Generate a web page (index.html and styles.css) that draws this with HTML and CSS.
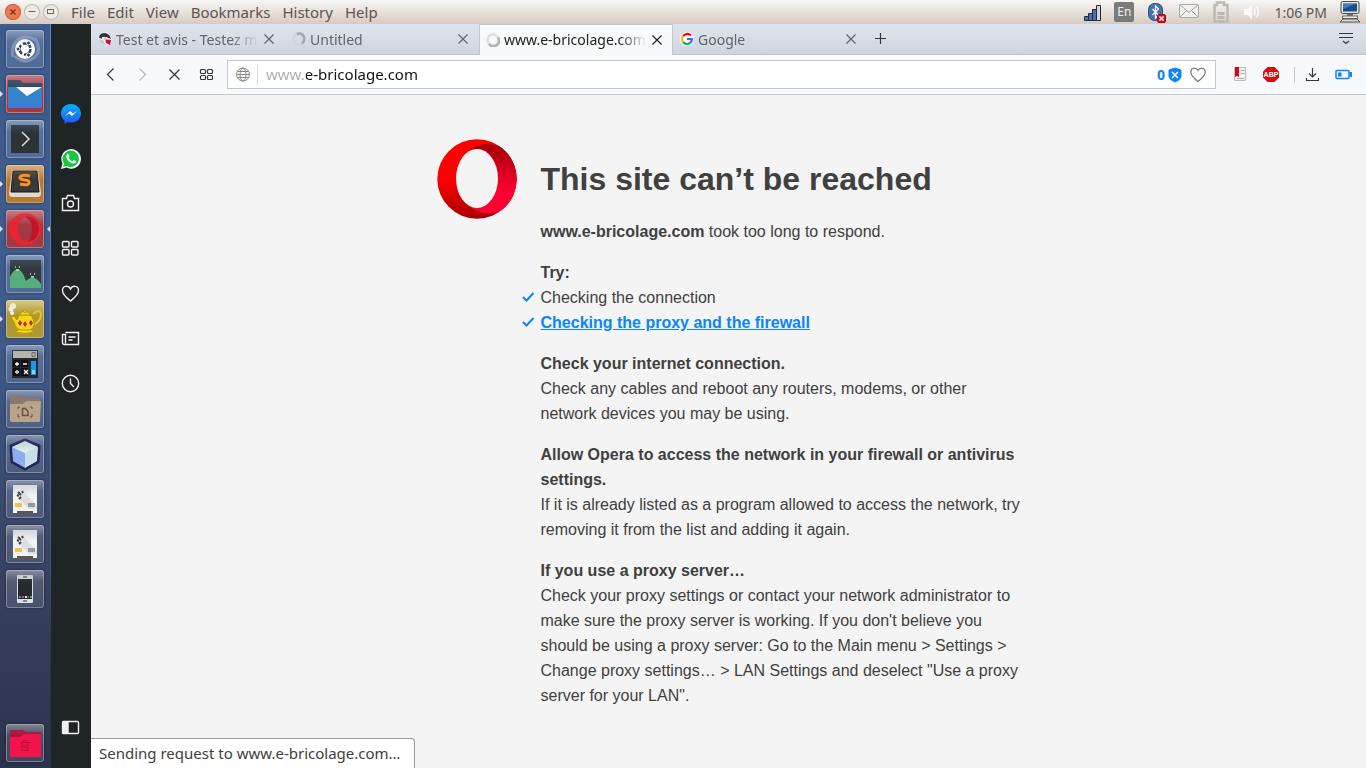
FILE: index.html
```html
<!DOCTYPE html>
<html lang="en">
    <head>
        <meta charset="utf-8">
        <title>www.e-bricolage.com</title>
        <link rel="stylesheet" href="styles.css">
    </head>
    <body>
        <!-- desktop panel -->
        <header class="panel">
            <div class="window-buttons">
                <button class="win close" type="button" aria-label="Close window"><svg width="16" height="16" viewBox="0 0 16 16"><path d="M5.500 5.500l5 5M10.500 5.500l-5 5" stroke="#7b3a22" stroke-width="1.500"/></svg></button>
                <button class="win" type="button" aria-label="Minimize"><svg width="16" height="16" viewBox="0 0 16 16"><path d="M4.500 7.500h7" stroke="#6c6760"/></svg></button>
                <button class="win" type="button" aria-label="Maximize"><svg width="16" height="16" viewBox="0 0 16 16"><rect x="4.500" y="5.500" width="6" height="4" fill="none" stroke="#6c6760"/></svg></button>
            </div>
            <nav class="menu">
                <button type="button">File</button>
                <button type="button">Edit</button>
                <button type="button">View</button>
                <button type="button">Bookmarks</button>
                <button type="button">History</button>
                <button type="button">Help</button>
            </nav>
            <div class="indicators">
                <svg width="20" height="24" viewBox="0 0 20 24"><g fill="#4571b0" stroke="#252a33"><path d="M2.500 16.500h4v4h-4zM6.500 13.500h4v7h-4zM10.500 9.500h4v11h-4z"/><path d="M14.500 5.500h4v15h-4z" fill="#d5d5dc"/></g></svg>
                <span class="lang">En</span>
                <svg width="20" height="24" viewBox="0 0 20 24"><rect x="2.500" y="3.500" width="14" height="17" rx="6" fill="#4572ac" stroke="#274c7e"/><path d="M6.500 9l6 6-3 3V6l3 3-6 6" fill="none" stroke="#fff" stroke-width="1.200"/><rect x="11.500" y="14.500" width="8" height="8" rx="1.500" fill="#d11322" stroke="#a50b18"/><path d="M13.500 16.500l4 4m0-4l-4 4" stroke="#fff" stroke-width="1.500"/></svg>
                <svg width="22" height="24" viewBox="0 0 22 24"><rect x="1.500" y="4.500" width="19" height="13" rx="1" fill="#f1f1ed" stroke="#a9a8a3"/><path d="M2 5l9 7.500L20 5M2 17l6-6M20 17l-6-6" fill="none" stroke="#a09f9a"/></svg>
                <svg width="18" height="24" viewBox="0 0 18 24"><path d="M5 2.500h7V5h3.500v16.500h-13V5H5z" fill="none" stroke="#bcb9b5" stroke-width="2.500"/><path d="M5.500 13.500h7M5.500 17.500h7" stroke="#bcb9b5" stroke-width="3"/></svg>
                <svg width="20" height="24" viewBox="0 0 20 24"><path d="M2 9h4l4-5v16l-4-5H2z" fill="#fbfaf8"/><path d="M12 9q2 3 0 6M14.500 6.500q4 5.500 0 11" fill="none" stroke="#fbfaf8" stroke-width="1.500"/></svg>
                <span class="clock">1:06 PM</span>
                <svg width="22" height="24" viewBox="0 0 22 24"><rect x="2" y="1.500" width="18" height="12" rx="1.500" fill="#e3e5df" stroke="#4b4d4a"/><rect x="4" y="3.500" width="14" height="8" fill="#194d93"/><path d="M4 4h12L4 9z" fill="#487bba"/><path d="M8 14h6v2H8z" fill="#777"/><rect x="3.500" y="16" width="15" height="2.500" fill="#eeeeea" stroke="#666"/><path d="M4 19h14l3 3H1z" fill="#d7d8d3" stroke="#555"/></svg>
            </div>
        </header>

        <div class="desktop">
            <!-- launcher -->
            <nav class="launcher">
                <button class="tile dash" type="button" aria-label="Dash"><svg width="38" height="38" viewBox="0 0 38 38"><g fill="none" stroke="#fff" stroke-opacity=".25" stroke-width="3"><path d="M7 27Q4 10 19 7q8 0 12 5M29 8q9 16-5 22-9 3-15-4"/></g><circle cx="19" cy="19" r="10" fill="#fff"/><circle cx="19" cy="19" r="5.500" fill="none" stroke="#31415e" stroke-width="2.500" stroke-dasharray="9.500 2"/><g fill="#31415e" stroke="#fff"><circle cx="12" cy="19" r="2"/><circle cx="22.500" cy="13" r="2"/><circle cx="22.500" cy="25" r="2"/></g></svg></button>
                <button class="tile red running" type="button" aria-label="Mail"><svg width="38" height="38" viewBox="0 0 38 38"><path d="M2 5h12l3 3h19v25H2z" fill="#235069"/><path d="M2 12h34v21H2z" fill="#3484cb"/><path d="M2 27h34v6H2z" fill="#397ed0"/><path d="M10 12h26l-15 9z" fill="#fff"/></svg></button>
                <button class="tile" type="button" aria-label="Terminal"><svg width="38" height="38" viewBox="0 0 38 38"><path d="M5 5h28v28H5z" fill="#2d3237"/><path d="M16 12l7 7-7 7" fill="none" stroke="#ddd" stroke-width="1.500"/></svg></button>
                <button class="tile orange running" type="button" aria-label="Sublime Text"><svg width="38" height="38" viewBox="0 0 38 38"><path d="M6 5h26l3 23q0 4-3 4H6q-3 0-3-4z" fill="#dedbd7"/><path d="M7 6h24l2 21H5z" fill="#393938" stroke="#171717"/><path d="M24 11q-9-2-10 1.500 0 2 5 2.500 5 .5 4 3-1 3-9 1" fill="none" stroke="#ff911c" stroke-width="3"/></svg></button>
                <button class="tile red running active" type="button" aria-label="Opera"><svg width="38" height="38" viewBox="0 0 38 38"><path fill="#e8262f" fill-rule="evenodd" d="M19 3a16 16 0 1 0 .1 0zM20 7q6 2 6 12t-6 12q-8-2-8-12t8-12z"/><path d="M21 6q11 1 12 13-1 12-12 13 5-4 5-13T19 7z" fill="#bd1525"/></svg></button>
                <button class="tile" type="button" aria-label="System monitor"><svg width="38" height="38" viewBox="0 0 38 38"><path d="M4 5h31v28H4z" fill="#30393c"/><path d="M4 22q3-7 7-8 5 0 9 12 4-4 8-3 4 1 7 6v4H4z" fill="#55af7c"/><path d="M9 12h1m3 0h1m-4 3h3m11 4h1m3 0h1m-4 3h3" stroke="#bde2ca" stroke-width="1.500"/></svg></button>
                <button class="tile yellow running" type="button" aria-label="Teapot"><svg width="38" height="38" viewBox="0 0 38 38"><g fill="#f5d81e" stroke="#b59500"><path d="M27 14q7-6 8 0 0 8-8 11" fill="none" stroke="#e6c426" stroke-width="2"/><path d="M14 29h10l4 3q-9 3-19 0z"/><path d="M13 15h12q7 11-1 15H14Q8 27 8 22l-3-5 3-1 3 4z"/><path d="M13 15q6-8 12 0z"/><circle cx="19" cy="11" r="1.500"/></g><path d="M14 20l2 3-2 3-2-3zm5 1l2 3-2 3-2-3zm6-1l2 3-2 3-2-3z" fill="#d52120"/><g fill="#f7f7f7"><circle cx="7" cy="6" r="3"/><circle cx="5" cy="9" r="2.500"/><circle cx="6" cy="13" r="2"/></g></svg></button>
                <button class="tile" type="button" aria-label="Calculator"><svg width="38" height="38" viewBox="0 0 38 38"><path d="M6 5h26v28H6z" fill="#25282c"/><path d="M7 6h24v7H7z" fill="#c1bcb0"/><path d="M26 7.500h3v4h-3z" fill="none" stroke="#6d6b65"/><path d="M7 15h7v7H7zm8 0h7v7h-7zm-8 8h7v8H7zm8 0h7v8h-7z" fill="#0d0f12"/><path d="M9 19h4m-2-2v4m6-2h4M9 27h4m-2-2v1m0 2v1m7-4l4 4m0-4l-4 4" stroke="#fff" stroke-width="1.300"/><path d="M25 16h5v14h-5z" fill="#1899ef"/><path d="M26 26h3m-3 2h3" stroke="#fff"/></svg></button>
                <button class="tile" type="button" aria-label="Files"><svg width="38" height="38" viewBox="0 0 38 38"><path d="M4 7q0-2 2-2h10l3 3h13q2 0 2 3v20H4z" fill="#8d7a67"/><path d="M4 14h13l3-3h15l-1 20q0 1-2 1H6q-2 0-2-2z" fill="#baa58a"/><path d="M12 19v-2h2m10 0h2v2m0 5v3h-2m-10 0h-2v-3" fill="none" stroke="#65533f"/><path d="M16.500 18.500h3l2.500 3v4h-5.500z" fill="none" stroke="#65533f" stroke-width="1.500"/></svg></button>
                <button class="tile" type="button" aria-label="VirtualBox"><svg width="38" height="38" viewBox="0 0 38 38"><path d="M19 5l14 6-1 16-13 7-13-7-1-16z" fill="#c9e4ee" stroke="#20245c" stroke-width="3" stroke-linejoin="round"/><path d="M6 12l13 6v15L7 26z" fill="#8eadee"/><path d="M19 18l13-6-1 14-12 7z" fill="#c9dfe5"/><path d="M6 12l13-6 13 6-13 6z" fill="#d9eee7"/></svg></button>
                <button class="tile" type="button" aria-label="Disk image writer"><svg width="38" height="38" viewBox="0 0 38 38"><path d="M7 5h24v28H7z" fill="#f3f3f4"/><path d="M12 18l6-6 13 14v3h-8z" fill="#dededf"/><path d="M11 15l2 1m-1-4l3 3m1-4l1 2m-4 6l2-2" stroke="#3e4044" stroke-width="2"/><path d="M9 23h7v4H9z" fill="#f7bd57"/><path d="M22 23h7v4h-7z" fill="#999"/><path d="M11 31h16v2H11z" fill="#655438"/></svg></button>
                <button class="tile" type="button" aria-label="Disk creator"><svg width="38" height="38" viewBox="0 0 38 38"><path d="M7 5h24v28H7z" fill="#f3f3f4"/><path d="M12 18l6-6 13 14v3h-8z" fill="#dededf"/><path d="M11 15l2 1m-1-4l3 3m1-4l1 2m-4 6l2-2" stroke="#3e4044" stroke-width="2"/><path d="M9 23h7v4H9z" fill="#f7bd57"/><path d="M22 23h7v4h-7z" fill="#999"/><path d="M11 31h16v2H11z" fill="#655438"/></svg></button>
                <button class="tile" type="button" aria-label="Phone"><svg width="38" height="38" viewBox="0 0 38 38"><rect x="11" y="5" width="16" height="28" rx="1" fill="#dce1e3"/><path d="M12 9h14v20H12z" fill="#26292c"/><path d="M17 7h4m-4 24h4" stroke="#333"/><path d="M13 27h2" stroke="#2799e8" stroke-width="2"/><path d="M16 27h2m4 0h1" stroke="#e83b62" stroke-width="2"/><path d="M19 27h2" stroke="#eee" stroke-width="2"/><path d="M24 27h2" stroke="#31b86c" stroke-width="2"/></svg></button>
                <button class="tile trash" type="button" aria-label="Trash"><svg width="38" height="38" viewBox="0 0 38 38"><path d="M4 6h13l3 2h15v10H4z" fill="#b80f3c"/><path d="M4 13h10l3-3h18v23H4z" fill="#f4144d"/><path d="M14 18.500h10m-8 0v8h6v-8m-5 0v-2h4v2m-3 2v4m2-4v4" fill="none" stroke="#b80f3c"/></svg></button>
            </nav>

            <!-- opera side bar -->
            <nav class="sidebar">
                <button type="button" aria-label="Messenger"><svg width="20" height="20" viewBox="0 0 20 20"><defs><linearGradient id="messenger" x1="0" y1="0" x2="0" y2="1"><stop stop-color="#00b2ff"/><stop offset="1" stop-color="#2857f6"/></linearGradient></defs><path d="M10 0C4 0 0 4 0 9.500c0 3 1.500 5.500 3.500 7V20l3-2q2 .5 3.500.5c6 0 10-4 10-9S16 0 10 0z" fill="url(#messenger)"/><path d="M4 12l5-5 3 2.500L16 7l-5 5-3-2.500z" fill="#fff"/></svg></button>
                <button type="button" aria-label="WhatsApp"><svg width="20" height="20" viewBox="0 0 20 20"><path d="M0 20l1.500-5.500A9.800 9.800 0 1 1 5.500 18.500z" fill="#fff"/><path d="M2 18l1-3.500A8.200 8.200 0 1 1 5.800 17z" fill="#15c842"/><path d="M6 5q1-1 2 1l.5 1.500-1 1q1 2.500 4 4l1-1.500 2.500 1q.5 1-1 2-3 1.500-6.500-2T6 5z" fill="#fff"/></svg></button>
                <button type="button" aria-label="Snapshot"><svg width="20" height="20" viewBox="0 0 20 20"><path d="M1.500 4.500h4l1-3h6l1 3h4v12h-16z"/><circle cx="9.500" cy="10" r="3"/></svg></button>
                <button type="button" aria-label="Speed Dial"><svg width="20" height="20" viewBox="0 0 20 20"><rect x="1.500" y="2.500" width="6.500" height="5.500" rx="1"/><rect x="10.500" y="2.500" width="6.500" height="5.500" rx="1"/><rect x="1.500" y="10.500" width="6.500" height="5.500" rx="1"/><rect x="10.500" y="10.500" width="6.500" height="5.500" rx="1"/></svg></button>
                <button type="button" aria-label="Bookmarks"><svg width="20" height="20" viewBox="0 0 20 20"><path d="M9.500 17C6.500 14.500 1.500 11 1.500 6.500c0-5 6-5.500 8-1.500 2-4 8-3.500 8 1.500 0 4.500-5 8-8 10.500z"/></svg></button>
                <button type="button" aria-label="News"><svg width="20" height="20" viewBox="0 0 20 20"><path d="M4.500 3.500h13v12h-14q-2 0-2-2v-8h3v9M7.500 8h7M7.500 11h4"/></svg></button>
                <button type="button" aria-label="History"><svg width="20" height="20" viewBox="0 0 20 20"><circle cx="9.500" cy="9.500" r="8.200"/><path d="M9.500 4.500v5l3.500 3.500"/></svg></button>
                <button class="panel-toggle" type="button" aria-label="Sidebar setup"><svg width="20" height="20" viewBox="0 0 20 20"><rect x="1.500" y="3.500" width="16" height="12" rx="1"/><path d="M2 4h5v11H2z" fill="#eee"/></svg></button>
            </nav>

            <div class="browser">
                <div class="tabs">
                    <div class="tab">
                        <svg width="14" height="14" viewBox="0 0 14 14"><circle cx="7" cy="7" r="6.500" fill="#fff"/><path d="M1 6q0-5 6-5 5 1 6 6L8 5 5 7z" fill="#34373a"/><path d="M1 7l4 1 3 5q-7 0-7-6z" fill="#c5c9cb"/><path d="M4 5h3v3H4z" fill="#e8e8e8"/><path d="M7 7l6 1-1 5-4-2z" fill="#e20052"/><path d="M6 6l3 1-2 2z" fill="#f5ba27"/></svg>
                        <button class="title" type="button">Test et avis - Testez m</button>
                        <button class="x" type="button" aria-label="Close tab"><svg width="12" height="12" viewBox="0 0 12 12"><path d="M1.500 1.500l9 9m0-9l-9 9"/></svg></button>
                    </div>
                    <div class="tab">
                        <svg width="14" height="14" viewBox="0 0 14 14"><circle cx="7" cy="7" r="5.500" fill="none" stroke="#cfd5dd" stroke-width="2.500"/><path d="M5 2q5-2 7 3 1 4-2 6.500" fill="none" stroke="#a2a8b0" stroke-width="2.500"/></svg>
                        <button class="title" type="button">Untitled</button>
                        <button class="x" type="button" aria-label="Close tab"><svg width="12" height="12" viewBox="0 0 12 12"><path d="M1.500 1.500l9 9m0-9l-9 9"/></svg></button>
                    </div>
                    <div class="tab current">
                        <svg width="14" height="14" viewBox="0 0 14 14"><circle cx="7" cy="7" r="5.500" fill="none" stroke="#dedfe1" stroke-width="2.500"/><path d="M12 4.500A5.500 5.500 0 0 1 3 11" fill="none" stroke="#b1b2b4" stroke-width="2.500"/></svg>
                        <button class="title" type="button">www.e-bricolage.com</button>
                        <button class="x" type="button" aria-label="Close tab"><svg width="12" height="12" viewBox="0 0 12 12"><path d="M1.500 1.500l9 9m0-9l-9 9"/></svg></button>
                    </div>
                    <div class="tab">
                        <svg width="14" height="14" viewBox="0 0 14 14"><circle cx="7" cy="7" r="7" fill="#fff"/><g fill="none" stroke-width="2.200"><path d="M11 3.500Q7 0 3 4" stroke="#f00"/><path d="M3 4Q1 7 3 10" stroke="#fbbc05"/><path d="M3 10q3 3.500 7 1" stroke="#0cae49"/><path d="M10 11q2-1.500 2-4H7" stroke="#4267ff"/></g></svg>
                        <button class="title" type="button">Google</button>
                        <button class="x" type="button" aria-label="Close tab"><svg width="12" height="12" viewBox="0 0 12 12"><path d="M1.500 1.500l9 9m0-9l-9 9"/></svg></button>
                    </div>
                    <button class="icon new-tab" type="button" aria-label="New tab"><svg width="12" height="12" viewBox="0 0 12 12"><path d="M5.500 0v11M0 5.500h11"/></svg></button>
                    <button class="icon tab-menu" type="button" aria-label="Tab menu"><svg width="16" height="14" viewBox="0 0 16 14"><path d="M1 1.500h14M1 5.500h14M5 9l3 2.500L11 9"/></svg></button>
                </div>

                <div class="toolbar">
                    <button class="icon" type="button" aria-label="Back"><svg width="16" height="16" viewBox="0 0 16 16"><path d="M10.500 1.500l-6 6 6 6"/></svg></button>
                    <button class="icon off" type="button" aria-label="Forward"><svg width="16" height="16" viewBox="0 0 16 16"><path d="M4.500 1.500l6 6-6 6"/></svg></button>
                    <button class="icon" type="button" aria-label="Stop"><svg width="16" height="16" viewBox="0 0 16 16"><path d="M2.500 2.500l10 10M12.500 2.500l-10 10"/></svg></button>
                    <button class="icon" type="button" aria-label="Speed Dial"><svg width="16" height="16" viewBox="0 0 16 16"><rect x="1.500" y="2.500" width="5" height="4" rx="1"/><rect x="8.500" y="2.500" width="5" height="4" rx="1"/><rect x="1.500" y="8.500" width="5" height="4" rx="1"/><rect x="8.500" y="8.500" width="5" height="4" rx="1"/></svg></button>
                    <div class="address">
                        <svg class="globe" width="16" height="16" viewBox="0 0 16 16"><circle cx="8" cy="7.500" r="6.500"/><ellipse cx="8" cy="7.500" rx="3" ry="6.500"/><path d="M1.500 7.500h13M2.500 4.500h11M2.500 10.500h11"/></svg>
                        <input class="url" type="text" aria-label="Address" value="www.e-bricolage.com">
                        <span class="blocked">0</span>
                        <svg width="14" height="16" viewBox="0 0 14 16"><path d="M7 1l6 2v7q-1 3-6 5-5-2-6-5V3z" fill="#0a84ff" stroke="#0a84ff"/><path d="M4 5l6 6m0-6l-6 6" stroke="#fff" stroke-width="1.500"/></svg>
                        <button class="icon heart" type="button" aria-label="Save to bookmarks"><svg width="18" height="16" viewBox="0 0 18 16"><path d="M9 14.500c-3-2.500-7.200-5.500-7.200-9.500C1.800.5 7 0 9 3.500 11 0 16.200.5 16.200 5c0 4-4.200 7-7.200 9.500z"/></svg></button>
                    </div>
                    <div class="extensions">
                        <button class="icon" type="button" aria-label="Reader"><svg width="16" height="16" viewBox="0 0 16 16"><rect x="2.500" y=".5" width="11" height="13" rx="1" fill="#f5f5f5" stroke="#bbb"/><path d="M8.500 3.500h4M8.500 6.500h4M5 11.500h7" stroke="#aaa"/><path d="M3 0h4v10L5 9l-2 1z" fill="#d00d18" stroke="none"/></svg></button>
                        <button class="icon" type="button" aria-label="Adblock Plus"><svg width="18" height="18" viewBox="0 0 18 18"><path d="M5.500 1h7L17 5.500v6L12.500 16h-7L1 11.500v-6z" fill="#d80b10" stroke="none"/><text class="abp" x="9" y="11" text-anchor="middle">ABP</text></svg></button>
                        <span class="divider"></span>
                        <button class="icon" type="button" aria-label="Downloads"><svg width="16" height="16" viewBox="0 0 16 16"><path d="M7.500 1v9M4 6.500l3.500 3.500L11 6.500M1.500 11v2.500h12V11"/></svg></button>
                        <button class="icon" type="button" aria-label="Battery saver"><svg width="18" height="16" viewBox="0 0 18 16"><rect x="1" y="3.500" width="13" height="8" rx="1" stroke="#0a84ff" stroke-width="1.500"/><path d="M3 5.500h3.500v4H3zM14.500 5H17v5h-2.500z" fill="#0a84ff" stroke="none"/></svg></button>
                    </div>
                </div>

                <main class="page">
                    <div class="error">
                        <svg class="logo" width="80" height="80" viewBox="0 0 80 80">
                            <defs>
                                <linearGradient id="left" x1="0" y1="0" x2="0" y2="1"><stop offset=".5" stop-color="#ff0000"/><stop offset="1" stop-color="#a70000"/></linearGradient>
                                <linearGradient id="right" x1="0" y1="0" x2="0" y2="1"><stop stop-color="#a30005"/><stop offset=".7" stop-color="#ff0033"/></linearGradient>
                            </defs>
                            <circle cx="40" cy="40" r="39.700" fill="url(#left)"/>
                            <path d="M33 11q15-11 32-2a40 40 0 0 1 0 62q-17 8-32-3c3 1 5 1 7 1 12 0 21-12 21-29S52 11 40 11c-2 0-4 0-7 0z" fill="url(#right)"/>
                            <ellipse cx="40" cy="39.500" rx="21" ry="29.500" fill="#f4f4f4"/>
                        </svg>
                        <div class="message">
                            <h1>This site can’t be reached</h1>
                            <p><b>www.e-bricolage.com</b> took too long to respond.</p>
                            <b>Try:</b>
                            <ul class="checks">
                                <li><svg width="14" height="14" viewBox="0 0 14 14"><path d="M2 6l3.500 3.500L12.500 2"/></svg>Checking the connection</li>
                                <li><svg width="14" height="14" viewBox="0 0 14 14"><path d="M2 6l3.500 3.500L12.500 2"/></svg><a href="#proxy">Checking the proxy and the firewall</a></li>
                            </ul>
                            <p><b>Check your internet connection.</b><br>
                            Check any cables and reboot any routers, modems, or other network devices you may be using.</p>
                            <p><b>Allow Opera to access the network in your firewall or antivirus settings.</b><br>
                            If it is already listed as a program allowed to access the network, try removing it from the list and adding it again.</p>
                            <p id="proxy"><b>If you use a proxy server…</b><br>
                            Check your proxy settings or contact your network administrator to make sure the proxy server is working. If you don't believe you should be using a proxy server: Go to the Main menu &gt; Settings &gt; Change proxy settings… &gt; LAN Settings and deselect "Use a proxy server for your LAN".</p>
                        </div>
                    </div>
                    <div class="status">Sending request to www.e-bricolage.com…</div>
                </main>
            </div>
        </div>
    </body>
</html>
```

FILE: styles.css
```css
* {
    box-sizing: border-box;
}
body {
    margin: 0;
    min-height: 100vh;
    display: flex;
    flex-direction: column;
    font-family: "Noto Sans", "Open Sans", sans-serif;
    font-size: 14px;
    color: #404040;
}
button {
    margin: 0;
    padding: 0;
    border: none;
    background: none;
    font: inherit;
    color: inherit;
}
svg {
    display: block;
    flex: none;
}

/* desktop panel */
.panel {
    display: flex;
    align-items: center;
    height: 24px;
    padding: 0 5px;
    background: linear-gradient(#f8f6f4, #d6cbc2);
    color: #5c5550;
}
.window-buttons {
    display: flex;
    gap: 3px;
}
.win {
    width: 16px;
    height: 16px;
    border-radius: 50%;
    background: #eee9e4;
    box-shadow: 0 0 0 1px #bfb8b1 inset;
}
.win.close {
    background: #ee7850;
    box-shadow: 0 0 0 1px #d5603d inset;
}
.menu {
    display: flex;
    gap: 12px;
    margin-left: 12px;
    font-size: 15px;
    line-height: 22px;
}
.indicators {
    display: flex;
    align-items: center;
    gap: 12px;
    margin-left: auto;
}
.lang {
    width: 20px;
    line-height: 20px;
    border-radius: 2px;
    background: #7d7b79;
    color: #eee;
    font-size: 12px;
    text-align: center;
}

.desktop {
    flex: 1;
    display: flex;
}

/* launcher */
.launcher {
    display: flex;
    flex-direction: column;
    gap: 7px;
    width: 51px;
    padding: 6px;
    background: linear-gradient(#3d5c8e, #3f5c8c 40%, #38415f 75%, #2b324b);
    border-right: 1px solid;
    border-image: linear-gradient(#6088cc, #4d6ea6 60%, #2b324b 85%) 1;
}
.tile {
    position: relative;
    width: 38px;
    height: 38px;
    border-radius: 3px;
    background: linear-gradient(#ffffff66, #ffffff22 30%, #ffffff18);
    box-shadow: 0 0 0 1px #ffffff33 inset, 0 0 3px #00000066;
}
.tile.red {
    background: linear-gradient(#c38087, #a23943 40%);
}
.tile.orange {
    background: linear-gradient(#dcb280, #b87930 40%);
}
.tile.yellow {
    background: linear-gradient(#d8cb84, #ae9835 40%);
}
/* glossy light over the upper part of the icon */
.tile svg {
    border-radius: 3px;
    box-shadow: 0 0 0 1px #ffffff22 inset;
    -webkit-mask-image: linear-gradient(#000000aa, #000 40%);
    mask-image: linear-gradient(#000000aa, #000 40%);
}
.tile.running::before {
    content: "";
    position: absolute;
    left: -6px;
    top: 16px;
    border: 3px solid transparent;
    border-left-color: #dce0e8;
    border-right: none;
}
.tile.active::after {
    content: "";
    position: absolute;
    right: -6px;
    top: 16px;
    border: 3px solid transparent;
    border-right-color: #dce0e8;
    border-left: none;
}
.tile.trash {
    margin-top: auto;
}

/* side bar */
.sidebar {
    display: flex;
    flex-direction: column;
    align-items: center;
    gap: 25px;
    width: 40px;
    padding: 80px 0 30px;
    background: #1f2424;
}
.sidebar svg {
    fill: none;
    stroke: #f2f2f2;
    stroke-width: 1.4;
}
.sidebar button:nth-child(-n+2) svg {
    stroke: none;
}
.panel-toggle {
    margin-top: auto;
}

/* browser */
.browser {
    flex: 1;
    min-width: 0;
    display: flex;
    flex-direction: column;
}
.tabs {
    display: flex;
    align-items: center;
    height: 31px;
    border-bottom: 1px solid #c3c6ca;
    background: linear-gradient(#dfe5ef, #cfd5de);
}
.tab {
    flex: 0 1 194px;
    display: flex;
    align-items: center;
    gap: 4px;
    min-width: 0;
    height: 31px;
    padding: 0 10px 0 7px;
    color: #616569;
}
.tab.current {
    border: 1px solid #c3c6ca;
    border-bottom: none;
    padding: 0 9px 0 6px;
    background: #f7f9fc;
    color: #222;
}
.title {
    flex: 1;
    overflow: hidden;
    white-space: nowrap;
    text-align: left;
    -webkit-mask-image: linear-gradient(to right, #000 80%, transparent);
    mask-image: linear-gradient(to right, #000 80%, transparent);
}
.x svg,
.icon svg {
    fill: none;
    stroke: currentColor;
    stroke-width: 1.2;
}
.icon {
    color: #33383c;
}
.icon.off {
    color: #b7babd;
}
.new-tab {
    margin-left: 8px;
}
.tab-menu {
    margin-left: auto;
    margin-right: 12px;
}
.toolbar {
    display: flex;
    align-items: center;
    gap: 16px;
    height: 40px;
    padding: 0 13px 0 12px;
    border-bottom: 1px solid #c3c6ca;
    background: #f7f9fc;
}
.address {
    flex: 1;
    display: flex;
    align-items: center;
    gap: 3px;
    min-width: 0;
    height: 29px;
    margin-left: -4px;
    padding: 0 8px 0 7px;
    border: 1px solid #c3c6ca;
    background: #fff;
}
.globe {
    fill: none;
    stroke: #888;
}
.url {
    flex: 1;
    min-width: 0;
    height: 20px;
    margin-left: 3px;
    padding: 0 0 2px 8px;
    border: none;
    border-left: 1px solid #d6d6d6;
    outline: none;
    font: 15px "Noto Sans", "Open Sans", sans-serif;
    /* the www. prefix is paler than the host name */
    background: linear-gradient(to right, #aaa 48px, #111 48px);
    -webkit-background-clip: text;
    background-clip: text;
    color: transparent;
}
.blocked {
    color: #0a84ff;
    font-weight: bold;
}
.heart {
    margin-left: 4px;
    color: #777;
}
.extensions {
    display: flex;
    align-items: center;
    gap: 14px;
}
.divider {
    width: 1px;
    height: 16px;
    margin-right: -4px;
    background: #c3c6ca;
}
.abp {
    fill: #fff;
    stroke: none;
    font: bold 7px "Liberation Sans", sans-serif;
}

/* error page */
.page {
    position: relative;
    flex: 1;
    padding: 44px 20px 60px;
    background: #f4f4f4;
}
.error {
    display: flex;
    gap: 24px;
    max-width: 584px;
    margin: 0 auto;
    font: 16px/25px "Liberation Sans", Arial, sans-serif;
}
h1 {
    margin: 0;
    font-size: 32px;
    line-height: 80px;
}
p {
    margin: 0 0 16px;
}
p:last-child {
    margin: 0;
}
.checks {
    margin: 0 0 16px -20px;
    padding: 0;
    list-style: none;
}
.checks li {
    display: flex;
    align-items: center;
    gap: 6px;
}
.checks svg {
    fill: none;
    stroke: #0a84ff;
    stroke-width: 2;
}
.checks a {
    color: #0a84ff;
    font-weight: bold;
}
.status {
    position: absolute;
    left: 0;
    bottom: 0;
    padding: 0 14px 0 8px;
    border: 1px solid #999;
    border-left: none;
    border-bottom: none;
    border-top-right-radius: 4px;
    background: #fff;
    font-size: 15px;
    line-height: 29px;
}
```
